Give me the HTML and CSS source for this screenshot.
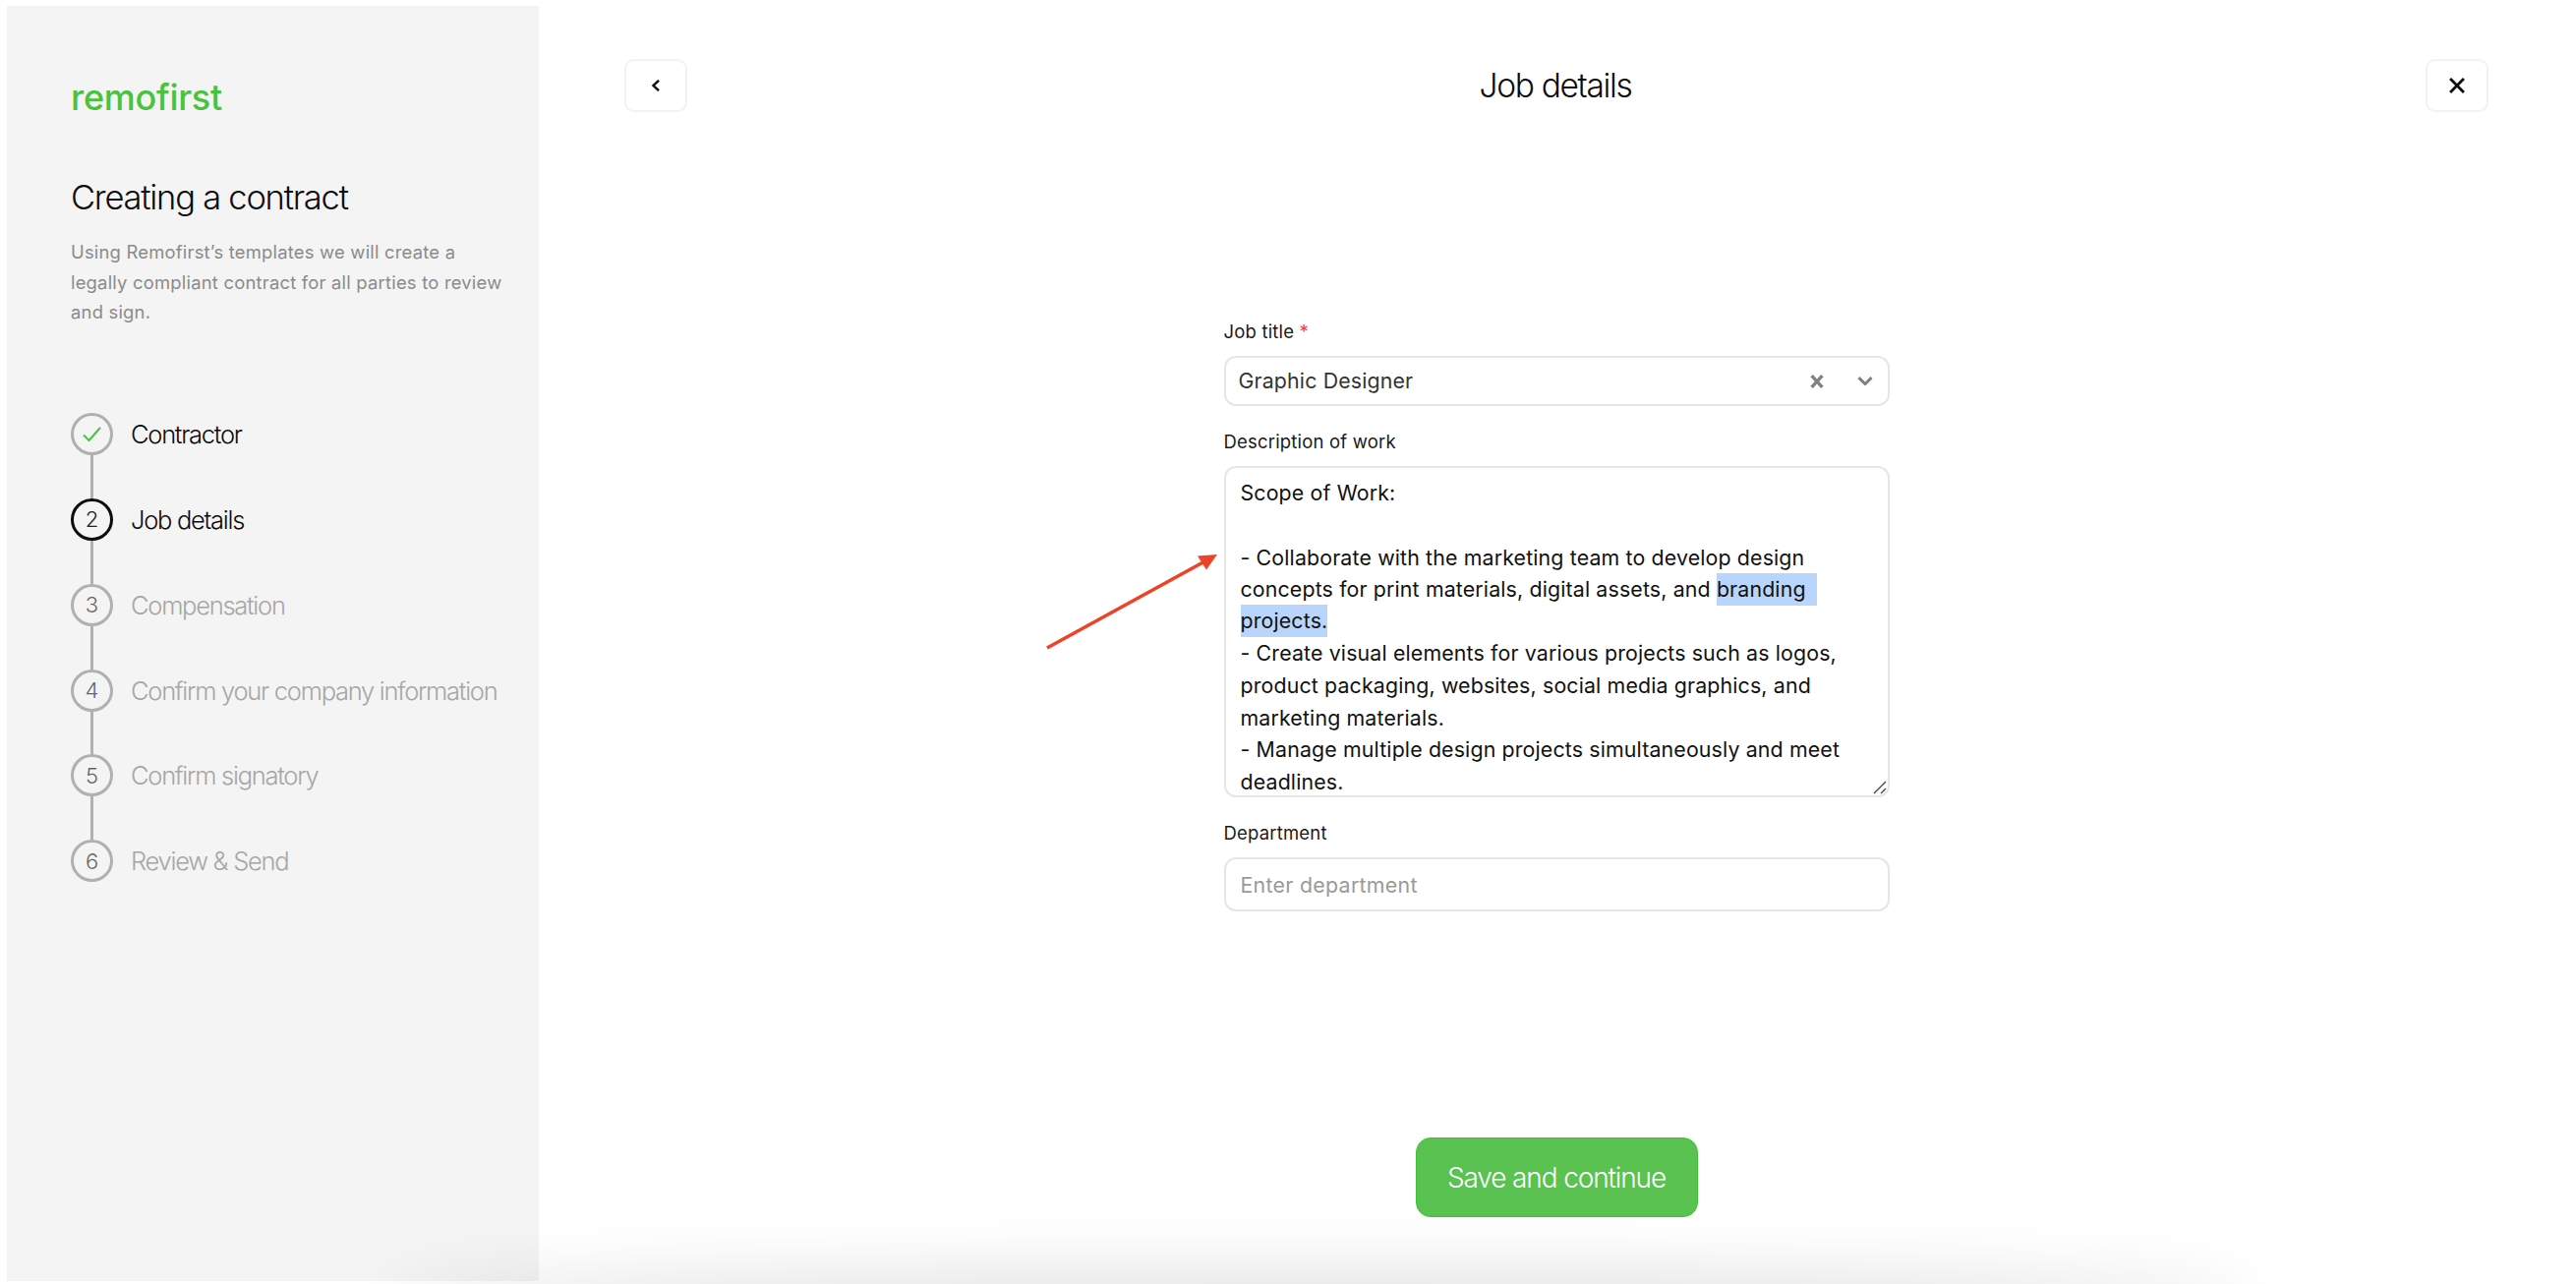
FILE: index.html
```html
<!DOCTYPE html>
<html lang="en">
<head>
<meta charset="utf-8">
<title>Creating a contract – Job details</title>
<link rel="stylesheet" href="styles.css">
</head>
<body>
<div class="app">
  <aside class="sidebar">
    <div class="logo">remofirst</div>
    <h1 class="side-title">Creating a contract</h1>
    <p class="side-desc">Using Remofirst’s templates we will create a<br>legally compliant contract for all parties to review<br>and sign.</p>
    <ol class="steps">
      <li class="step step-done">
        <span class="bullet"><svg class="check" viewBox="0 0 19 15"><path d="M1 8.5 6.5 14 18 1"/></svg></span>
        <span class="step-label">Contractor</span>
      </li>
      <li class="connector"></li>
      <li class="step step-active">
        <span class="bullet">2</span>
        <span class="step-label">Job details</span>
      </li>
      <li class="connector"></li>
      <li class="step">
        <span class="bullet">3</span>
        <span class="step-label">Compensation</span>
      </li>
      <li class="connector"></li>
      <li class="step">
        <span class="bullet">4</span>
        <span class="step-label">Confirm your company information</span>
      </li>
      <li class="connector"></li>
      <li class="step">
        <span class="bullet">5</span>
        <span class="step-label">Confirm signatory</span>
      </li>
      <li class="connector"></li>
      <li class="step">
        <span class="bullet">6</span>
        <span class="step-label">Review &amp; Send</span>
      </li>
    </ol>
  </aside>
  <main class="main">
    <header class="topbar">
      <button class="icon-btn" type="button" aria-label="Back"><svg class="ico-back" viewBox="0 0 10 12"><path d="M8 .8 2.5 6 8 11.2"/></svg></button>
      <h2 class="page-title">Job details</h2>
      <button class="icon-btn" type="button" aria-label="Close"><svg class="ico-close" viewBox="0 0 15 15"><path d="M1 1 14 14M14 1 1 14"/></svg></button>
    </header>
    <form class="form">
      <label class="label">Job title <span class="req">*</span></label>
      <div class="control select">
        <span class="select-value">Graphic Designer</span>
        <svg class="ico-clear" viewBox="0 0 13 13"><path d="M1.5 1 11.5 12M11.5 1 1.5 12"/></svg>
        <svg class="ico-chev" viewBox="0 0 16 9"><path d="M1.5 1.2 8 7.5 14.5 1.2"/></svg>
      </div>
      <label class="label label-next">Description of work</label>
      <div class="control textarea">Scope of Work:<br><br>- Collaborate with the marketing team to develop design<br>concepts for print materials, digital assets, and <span class="sel sel-trail">branding&nbsp;</span><br><span class="sel">projects.</span><br>- Create visual elements for various projects such as logos,<br>product packaging, websites, social media graphics, and<br>marketing materials.<br>- Manage multiple design projects simultaneously and meet<br>deadlines.<svg class="grip" viewBox="0 0 14 14"><path d="M1 13 13 1M8 13 13 8"/></svg></div>
      <label class="label label-next">Department</label>
      <div class="control input">Enter department</div>
    </form>
    <button class="primary" type="button">Save and continue</button>
  </main>
</div>
<svg class="arrow" viewBox="0 0 180 100"><path class="arrow-line" d="M1 96 165 6"/><path class="arrow-head" d="M174 1 154 2.5 163 16.5Z"/></svg>
<div class="bottom-glow"></div>
</body>
</html>
```

FILE: styles.css
```css
* { box-sizing: border-box; }
html, body { margin: 0; padding: 0; height: 100%; }
body {
  position: relative;
  width: 2620px;
  height: 1306px;
  overflow: hidden;
  background: #fff;
  color: #0c0c0c;
  font-family: Inter, "Liberation Sans", sans-serif;
}
.app { display: flex; height: 1306px; }

.sidebar {
  flex: 0 0 541px;
  margin: 6px 0 3px 7px;
  padding: 75px 0 0 65px;
  background: #f4f4f4;
}
.logo {
  font-size: 36px;
  line-height: 36px;
  font-weight: 500;
  letter-spacing: -0.008em;
  color: #48c33e;
}
.side-title {
  margin: 64px 0 0;
  font-size: 34.5px;
  line-height: 40px;
  font-weight: 300;
  letter-spacing: -0.036em;
  color: #0c0c0c;
}
.side-desc {
  margin: 20px 0 0;
  font-size: 18.4px;
  line-height: 30.6px;
  font-weight: 400;
  letter-spacing: 0.012em;
  color: #8b8b8b;
}
.steps { list-style: none; margin: 87.4px 0 0; padding: 0; }
.step { display: flex; align-items: center; height: 43px; gap: 18px; }
.bullet {
  flex: 0 0 43px;
  height: 43px;
  display: flex;
  align-items: center;
  justify-content: center;
  border: 3px solid #b0b0b0;
  border-radius: 50%;
  font-size: 22px;
  font-weight: 300;
  color: #666;
}
.step-label {
  font-size: 25.5px;
  font-weight: 300;
  letter-spacing: -0.05em;
  color: #a6a6a6;
  white-space: nowrap;
}
.connector { width: 3px; height: 43.8px; margin-left: 20px; background: #b0b0b0; }
.step-done .step-label, .step-active .step-label { color: #0c0c0c; }
.step-active .bullet { border-color: #0c0c0c; color: #222; }
.check { width: 19px; height: 15px; fill: none; stroke: #45c23b; stroke-width: 2; }

.main { flex: 1; display: flex; flex-direction: column; align-items: center; padding-right: 2px; }
.topbar {
  align-self: stretch;
  display: flex;
  align-items: center;
  justify-content: space-between;
  margin-top: 60px;
  padding: 0 87px;
}
.icon-btn {
  width: 64px;
  height: 54px;
  padding: 0;
  display: flex;
  align-items: center;
  justify-content: center;
  background: #fff;
  border: 2px solid #f2f2f2;
  border-radius: 10px;
}
.ico-back { width: 10px; height: 12px; fill: none; stroke: #0c0c0c; stroke-width: 2.4; }
.ico-close { width: 16px; height: 16px; fill: none; stroke: #0c0c0c; stroke-width: 2.6; }
.page-title {
  margin: 0 0 0 -2px;
  font-size: 33.5px;
  line-height: 40px;
  font-weight: 300;
  letter-spacing: -0.04em;
  color: #0c0c0c;
}

.form { width: 677px; margin-top: 211px; display: flex; flex-direction: column; }
.label {
  margin-bottom: 13px;
  font-size: 18.5px;
  line-height: 24px;
  font-weight: 430;
  letter-spacing: 0.01em;
  color: #1a1a1a;
}
.label-next { margin-top: 24px; }
.req { color: #e8413a; }
.control {
  border: 2px solid #e6e6e6;
  border-radius: 12px;
  background: #fff;
  font-size: 21.33px;
  letter-spacing: 0.15px;
}
.select {
  height: 51px;
  display: flex;
  align-items: center;
  padding: 0 15px 2px 13px;
  color: #333;
}
.select-value { flex: 1; }
.ico-clear { width: 14px; height: 14px; margin-top: 2px; fill: none; stroke: #808080; stroke-width: 3; }
.ico-chev { width: 16px; height: 9px; margin: 2px 0 0 34px; fill: none; stroke: #808080; stroke-width: 3; }
.textarea {
  position: relative;
  height: 337px;
  padding: 9.4px 15px 0;
  line-height: 32.6px;
  color: #111;
  white-space: nowrap;
  overflow: hidden;
}
.sel { background: #b9d5fb; padding: 3.4px 0; }
.sel-trail { padding-right: 5px; }
.grip {
  position: absolute;
  right: 1px;
  bottom: 1px;
  width: 14px;
  height: 14px;
  fill: none;
  stroke: #444;
  stroke-width: 1.3;
}
.input {
  height: 55px;
  display: flex;
  align-items: center;
  padding: 0 15px;
  color: #9a9a9a;
  letter-spacing: 0.3px;
}
.primary {
  width: 287px;
  height: 81px;
  margin-top: 230px;
  padding: 0;
  background: #5ac251;
  border: 1.5px solid #3fc232;
  border-radius: 15px;
  color: #fff;
  font-family: inherit;
  font-size: 28px;
  font-weight: 300;
  letter-spacing: -0.04em;
}

.arrow { position: absolute; left: 1064px; top: 563px; width: 180px; height: 100px; overflow: visible; }
.arrow-line { fill: none; stroke: #ee4327; stroke-width: 3.6; }
.arrow-head { fill: #ee4327; }
.bottom-glow {
  position: absolute;
  left: 395px;
  bottom: -36px;
  width: 1890px;
  height: 36px;
  border-radius: 50%;
  box-shadow: 0 0 66px 8px rgba(0, 0, 0, 0.15);
  pointer-events: none;
}
```
